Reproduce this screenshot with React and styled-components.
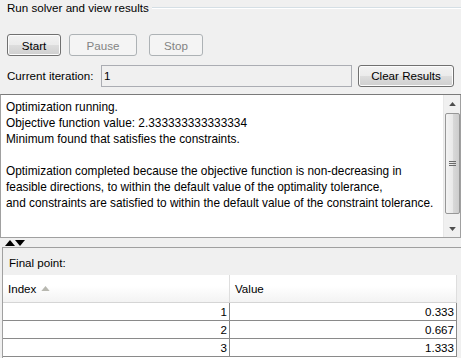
import React from 'react';
import styled, { createGlobalStyle } from 'styled-components';

const Global = createGlobalStyle`
  html, body { margin: 0; padding: 0; background: #f0f0f0; }
  body { font-family: "Liberation Sans", Arial, sans-serif; }
`;

const Page = styled.div`
  width: 461px;
  height: 358px;
  overflow: hidden;
  background: #f0f0f0;
  font-family: "Liberation Sans", Arial, sans-serif;
  font-size: 11.6px;
  color: #000;
  display: flex;
  flex-direction: column;
`;

const GroupHead = styled.div`
  display: flex;
  align-items: flex-start;
  height: 16px;
  padding-left: 7px;
`;

const GroupTitle = styled.span`
  line-height: 16px;
  padding-right: 3px;
`;

const GroupLine = styled.div`
  flex: 1;
  margin-top: 7px;
  border-top: 1px solid #d5dfe5;
  border-bottom: 1px solid #fff;
`;

const ButtonRow = styled.div`
  display: flex;
  align-items: center;
  margin-top: 18px;
  padding-left: 7px;
`;

const Button = styled.button`
  box-sizing: border-box;
  width: ${(p) => p.$w}px;
  height: 22px;
  margin-right: ${(p) => p.$gap || 0}px;
  padding: 0;
  font: inherit;
  border-radius: 3px;
  border: 1px solid ${(p) => (p.disabled ? '#adb2b5' : '#707070')};
  color: ${(p) => (p.disabled ? '#838383' : '#000')};
  background: ${(p) =>
    p.disabled
      ? '#f4f4f4'
      : 'linear-gradient(#f2f2f2 0%, #ebebeb 50%, #dddddd 51%, #cfcfcf 100%)'};
  box-shadow: ${(p) => (p.disabled ? 'none' : 'inset 0 0 0 1px #fcfcfc')};
`;

const IterRow = styled.div`
  display: flex;
  align-items: center;
  margin-top: 8px;
  padding-left: 7px;
  height: 23px;
`;

const Label = styled.span`
  width: 94px;
`;

const IterBox = styled.div`
  box-sizing: border-box;
  width: 251px;
  height: 22px;
  margin-right: 6px;
  border: 1px solid #abadb3;
  background: #f0f0f0;
  padding-left: 2px;
  line-height: 20px;
`;

const Output = styled.div`
  margin-top: 7px;
  box-sizing: border-box;
  height: 144px;
  width: 461px;
  display: flex;
  border-top: 1px solid #7a7a7a;
  border-left: 1px solid #a0a0a0;
  border-bottom: 1px solid #a0a0a0;
  background: #fff;
`;

const OutputText = styled.div`
  flex: 1;
  padding: 4px 0 0 5px;
  font-size: 11.85px;
  line-height: 16px;
  white-space: pre;
`;

const ScrollBar = styled.div`
  box-sizing: border-box;
  width: 18px;
  display: flex;
  flex-direction: column;
  align-items: center;
  background: #f0f0f0;
  border-left: 1px solid #e8e8e8;
  border-right: 1px solid #a0a0a0;
`;

const Arrow = styled.div`
  height: 17px;
  display: flex;
  align-items: center;
  justify-content: center;
`;

const Thumb = styled.div`
  box-sizing: border-box;
  width: 15px;
  height: 101px;
  margin: 1px 0;
  border: 1px solid #979797;
  border-radius: 2px;
  background: linear-gradient(90deg, #f3f3f3, #e9e9e9 50%, #d9d9d9 51%, #cdcdcd);
  display: flex;
  flex-direction: column;
  align-items: center;
  justify-content: center;
  gap: 1px;
`;

const Grip = styled.div`
  width: 7px;
  height: 1px;
  background: #6a6a6a;
`;

const Spacer = styled.div`
  flex: 1;
`;

const Splitter = styled.div`
  height: 9px;
  display: flex;
  align-items: center;
  padding-left: 5px;
`;

const Panel = styled.div`
  flex: 1;
  box-sizing: border-box;
  margin-left: 2px;
  border-top: 1px solid #a0a0a0;
  border-left: 1px solid #a0a0a0;
  display: flex;
  flex-direction: column;
`;

const PanelTitle = styled.div`
  height: 27px;
  line-height: 29px;
  padding-left: 6px;
  background: #f0f0f0;
`;

const Table = styled.div`
  flex: 1;
  background: #fff;
  margin-right: 4px;
`;

const Row = styled.div`
  display: grid;
  grid-template-columns: 227px 227px;
  height: ${(p) => (p.$head ? 28 : 18)}px;
  box-sizing: border-box;
  border-bottom: 1px solid ${(p) => (p.$head ? '#d5d5d5' : '#8a8a8a')};
  background: ${(p) => (p.$head ? 'linear-gradient(#fff 40%, #f3f3f3)' : '#fff')};
`;

const Cell = styled.div`
  box-sizing: border-box;
  display: flex;
  align-items: center;
  justify-content: ${(p) => (p.$head ? 'flex-start' : 'flex-end')};
  padding: ${(p) => (p.$head ? '0 0 0 5px' : '0 2px 0 0')};
  border-right: 1px solid ${(p) => (p.$head ? '#dedede' : '#8a8a8a')};
  gap: 5px;
`;

const Tri = ({ up, color = '#000', w = 9, h = 5 }) => (
  <svg width={w} height={h} viewBox="0 0 10 6">
    <polygon points={up ? '0,6 10,6 5,0' : '0,0 10,0 5,6'} fill={color} />
  </svg>
);

const rows = [
  ['1', '0.333'],
  ['2', '0.667'],
  ['3', '1.333'],
];

const text = `Optimization running.
Objective function value: 2.333333333333334
Minimum found that satisfies the constraints.

Optimization completed because the objective function is non-decreasing in
feasible directions, to within the default value of the optimality tolerance,
and constraints are satisfied to within the default value of the constraint tolerance.`;

export default function App() {
  return (
    <>
      <Global />
      <Page>
        <GroupHead>
          <GroupTitle>Run solver and view results</GroupTitle>
          <GroupLine />
        </GroupHead>
        <ButtonRow>
          <Button $w={54} $gap={8}>Start</Button>
          <Button $w={68} $gap={12} disabled>Pause</Button>
          <Button $w={54} disabled>Stop</Button>
        </ButtonRow>
        <IterRow>
          <Label>Current iteration:</Label>
          <IterBox>1</IterBox>
          <Button $w={96}>Clear Results</Button>
        </IterRow>
        <Output>
          <OutputText>{text}</OutputText>
          <ScrollBar>
            <Arrow><Tri up color="#4d4d4d" w={7} h={4} /></Arrow>
            <Thumb>
              <Grip />
              <Grip />
              <Grip />
            </Thumb>
            <Spacer />
            <Arrow><Tri color="#4d4d4d" w={7} h={4} /></Arrow>
          </ScrollBar>
        </Output>
        <Splitter>
          <Tri up w={10} h={6} />
          <Tri w={10} h={6} />
        </Splitter>
        <Panel>
          <PanelTitle>Final point:</PanelTitle>
          <Table>
            <Row $head>
              <Cell $head>Index <Tri up color="#b8b8b0" w={9} h={5} /></Cell>
              <Cell $head>Value</Cell>
            </Row>
            {rows.map(([i, v]) => (
              <Row key={i}>
                <Cell>{i}</Cell>
                <Cell>{v}</Cell>
              </Row>
            ))}
          </Table>
        </Panel>
      </Page>
    </>
  );
}
